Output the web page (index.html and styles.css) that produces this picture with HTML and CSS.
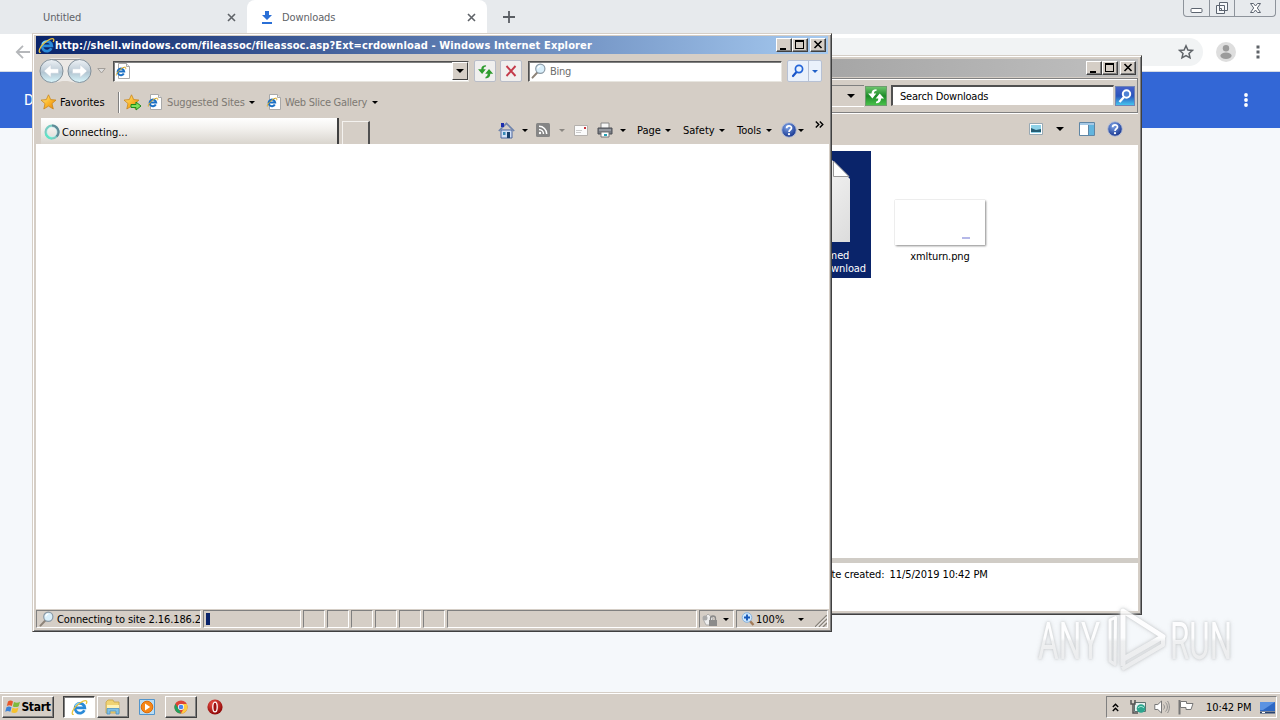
FILE: index.html
```html
<!DOCTYPE html>
<html lang="en">
<head>
  <meta charset="UTF-8">
  <meta name="viewport" content="width=device-width, initial-scale=1.0">
  <title>Desktop</title>
  <link rel="stylesheet" href="styles.css">
</head>
<body>
  <!-- shared icons -->
  <svg class="defs" width="0" height="0">
    <defs>
      <linearGradient id="orb" x1="0" y1="0" x2="0" y2="1">
        <stop offset="0" stop-color="#eef2f6"/><stop offset=".45" stop-color="#c3d0da"/><stop offset=".55" stop-color="#b2c5d1"/><stop offset="1" stop-color="#d9f6fc"/>
      </linearGradient>
      <linearGradient id="gold" x1="0" y1="0" x2="1" y2="1">
        <stop offset="0" stop-color="#fff0a0"/><stop offset=".5" stop-color="#fcb92c"/><stop offset="1" stop-color="#e88008"/>
      </linearGradient>
      <linearGradient id="paper" x1="0" y1="0" x2="1" y2="1">
        <stop offset="0" stop-color="#fff"/><stop offset="1" stop-color="#dcdcdc"/>
      </linearGradient>
      <linearGradient id="mark" gradientUnits="userSpaceOnUse" x1="0" y1="8" x2="0" y2="70">
        <stop offset="0" stop-color="#fff"/><stop offset=".48" stop-color="#fff"/><stop offset=".54" stop-color="#eeeff0"/><stop offset="1" stop-color="#e9eaeb"/>
      </linearGradient>
      <radialGradient id="help-ball" cx=".4" cy=".3" r=".7">
        <stop offset="0" stop-color="#7fa5e8"/><stop offset="1" stop-color="#17358f"/>
      </radialGradient>
      <radialGradient id="opera-ball" cx=".4" cy=".3" r=".7">
        <stop offset="0" stop-color="#f0574c"/><stop offset="1" stop-color="#8e0505"/>
      </radialGradient>
    </defs>
    <symbol id="ie" viewBox="0 0 16 16">
      <path d="M12.600 10.600A4.600 4.600 0 1 1 13 8.300H4.500" fill="none" stroke="#2a8ad8" stroke-width="2.600"/>
      <path d="M4 6.600A4.400 4.400 0 0 1 8 4" fill="none" stroke="#7fd0f8" stroke-width="1.200"/>
      <path d="M2.600 14.500C.6 15 .6 12.500 3 8.900 6.500 4.300 12 .9 14.300 1.700c.8.400.6 1.800 0 3" fill="none" stroke="#e9c23c" stroke-width="1.200"/>
    </symbol>
    <symbol id="ie-page" viewBox="0 0 16 16">
      <path d="M3.500.5h8l3 3v12h-11z" fill="#fff" stroke="#a9a9a9"/>
      <path d="M11.500.5v3h3" fill="#eee" stroke="#a9a9a9"/>
      <path d="M8.800 10.500A3.300 3.300 0 1 1 9.200 8.600H3.500" fill="none" stroke="#1c70c4" stroke-width="2"/>
      <path d="M1.300 12.500c-.8-2 6-9 9-8.300.8.300.5 1.300.2 2" fill="none" stroke="#dba91f"/>
    </symbol>
    <symbol id="star" viewBox="0 0 16 16">
      <path d="M7.500.8l2.200 4.800 5.300.5-4 3.500 1.300 5.400-4.800-2.900-4.700 2.900 1.200-5.400L0 6.100l5.300-.5z" fill="url(#gold)" stroke="#c9851b" stroke-width=".8"/>
    </symbol>
    <symbol id="lens" viewBox="0 0 16 16">
      <path d="M6.300 9.500L1.500 14.600" stroke="#8d8378" stroke-width="2" stroke-linecap="round"/>
      <circle cx="9.300" cy="5.800" r="4.600" fill="#d9effb" stroke="#8b9aa6" stroke-width="1.200"/>
      <path d="M6.800 5.500a2.600 2.600 0 0 1 2.600-2.400" fill="none" stroke="#fff" stroke-width="1.200"/>
    </symbol>
    <symbol id="swap" viewBox="0 0 16 16">
      <path d="M8.500 2C5.500 2 4 3.300 4 5.800H1L4.800 10.300 8.300 5.800H6.200C6.200 4.300 7 3.600 8.500 3.400z"/>
      <path d="M8 14.500c3 0 4.500-1.500 4.500-4.300h2.700L11.300 5.700 7.700 10.200h2.300c0 1.800-.6 2.500-2 2.900z"/>
    </symbol>
    <symbol id="help" viewBox="0 0 16 16">
      <circle cx="8" cy="8" r="7.300" fill="url(#help-ball)" stroke="#b6bfd6"/>
      <path d="M5.600 6.200c0-3.200 4.900-3.100 4.900-.3C10.500 7.800 8 7.800 8 10" fill="none" stroke="#fff" stroke-width="1.700"/>
      <circle cx="8" cy="12.200" r="1.100" fill="#fff"/>
    </symbol>
    <symbol id="min" viewBox="0 0 12 10"><path d="M2 8h6v2H2z"/></symbol>
    <symbol id="max" viewBox="0 0 12 10"><path d="M1 0h9v9H1zM2 2v6h7V2z" fill-rule="evenodd"/></symbol>
    <symbol id="close" viewBox="0 0 12 10"><path d="M2.500 1l7 7M9.500 1l-7 7" stroke="#000" stroke-width="1.600"/></symbol>
  </svg>

  <div class="desktop">
    <!-- Chrome, behind everything -->
    <div class="chrome">
      <div class="tabstrip">
        <div class="chrome-tab"><span>Untitled</span>
          <svg width="9" height="9" viewBox="0 0 9 9"><path d="M1 1l7 7M8 1L1 8" stroke="#5f6368" stroke-width="1.600"/></svg>
        </div>
        <div class="chrome-tab active">
          <svg width="12" height="13" viewBox="0 0 12 13"><path d="M4 0h4v4h3L6 9 1 4h3zM1 11h10v2H1z" fill="#2a6fd6"/></svg>
          <span>Downloads</span>
          <svg width="9" height="9" viewBox="0 0 9 9"><path d="M1 1l7 7M8 1L1 8" stroke="#5f6368" stroke-width="1.600"/></svg>
        </div>
        <svg class="plus" width="12" height="12" viewBox="0 0 12 12"><path d="M6 0v12M0 6h12" stroke="#5a5e63" stroke-width="1.800"/></svg>
        <div class="win7-buttons">
          <div><svg width="13" height="16" viewBox="0 0 13 16"><rect x="1" y="8.500" width="11" height="4" rx="1" fill="#fff" stroke="#5c6470"/></svg></div>
          <div><svg width="15" height="16" viewBox="0 0 15 16"><path d="M4.500 2.500h8v8h-8zM1.500 5.500h8v8h-8z" fill="#f6f8fa" stroke="#5c6470"/><path d="M4.500 8.500h2v2h-2z" fill="none" stroke="#5c6470"/></svg></div>
          <div><svg width="13" height="16" viewBox="0 0 13 16"><path d="M1.500 3.500h3l2 2.500 2-2.500h3L8.300 8l3.200 4.500h-3l-2-2.500-2 2.500h-3L4.700 8z" fill="#fff" stroke="#5c6470"/></svg></div>
        </div>
      </div>
      <div class="chrome-toolbar">
        <svg class="back" width="15" height="14" viewBox="0 0 15 14"><path d="M15 7H2M8 .8L1.800 7 8 13.200" fill="none" stroke="#b5b7ba" stroke-width="1.800"/></svg>
        <div class="omnibox">
          <svg width="16" height="16" viewBox="0 0 16 16"><path d="M8 1.800l1.900 4.200 4.500.4-3.400 3 1 4.400L8 11.500l-4 2.300 1-4.400-3.400-3L6.100 6z" fill="none" stroke="#5f6368" stroke-width="1.500"/></svg>
        </div>
        <svg class="avatar" width="20" height="20" viewBox="0 0 20 20"><circle cx="10" cy="10" r="10" fill="#dedede"/><circle cx="10" cy="6.300" r="3.200" fill="#9b9b9b"/><ellipse cx="10" cy="13.700" rx="5.600" ry="3.200" fill="#9b9b9b"/></svg>
        <svg width="4" height="14" viewBox="0 0 4 14"><path d="M.5.500h3v3h-3zM.5 5.500h3v3h-3zM.5 10.500h3v3h-3z" fill="#5f6368"/></svg>
      </div>
      <div class="page-header">
        <span>Downloads</span>
        <svg width="4" height="14" viewBox="0 0 4 14" fill="#fff"><circle cx="2" cy="2" r="1.900"/><circle cx="2" cy="7" r="1.900"/><circle cx="2" cy="12" r="1.900"/></svg>
      </div>
    </div>

    <!-- Explorer window -->
    <div class="window explorer">
      <div class="titlebar inactive">
        <span class="cap"><svg width="12" height="10"><use href="#min"/></svg></span><span class="cap"><svg width="12" height="10"><use href="#max"/></svg></span><span class="cap gap"><svg width="12" height="10"><use href="#close"/></svg></span>
      </div>
      <div class="explorer-nav">
        <div class="crumbs"><i class="arrow big"></i></div>
        <div class="go-green"><svg width="18" height="18" viewBox="0 0 16 16" fill="#fff"><use href="#swap"/></svg></div>
        <div class="explorer-search">Search Downloads</div>
        <div class="go-blue"><svg width="18" height="18" viewBox="0 0 18 18"><path d="M8 10l-4.500 5" stroke="#fff" stroke-width="2.400"/><circle cx="10.500" cy="7" r="3.700" fill="#4e82d4" stroke="#fff" stroke-width="2"/></svg></div>
      </div>
      <div class="explorer-tools">
        <svg width="14" height="12" viewBox="0 0 14 12"><path d="M.5.500h13v11H.5z" fill="#fff" stroke="#98a9b4"/><path d="M2 2h10v8H2z" fill="#8fd2e8"/><path d="M2 5l5 2 5-1v3H2z" fill="#245d74"/></svg>
        <i class="arrow big"></i>
        <svg width="16" height="14" viewBox="0 0 16 14"><path d="M.5.500h15v13H.5z" fill="#fff" stroke="#5f86a5"/><path d="M1 1h14v2H1z" fill="#a5c9e6"/><path d="M10 3h5v10h-5z" fill="#62b5de"/><path d="M9.500 3v10" stroke="#5f86a5"/></svg>
        <svg width="16" height="16"><use href="#help"/></svg>
      </div>
      <div class="files">
        <div class="file selected">
          <svg width="64" height="82" viewBox="0 0 64 82"><path d="M0 0h46l18 19v63H0z" fill="url(#paper)"/><path d="M47.500 1v15.500H63z" fill="#fff" stroke="#999"/></svg>
          <span class="line-one">Unconfirmed</span>
          <span>.crdownload</span>
        </div>
        <div class="file">
          <div class="thumb"><i></i></div>
          <span>xmlturn.png</span>
        </div>
      </div>
      <div class="details">Date created: <span>11/5/2019 10:42 PM</span></div>
    </div>

    <!-- Internet Explorer window -->
    <div class="window ie">
      <div class="titlebar">
        <svg width="17" height="17"><use href="#ie"/></svg>
        <span class="title">http://shell.windows.com/fileassoc/fileassoc.asp?Ext=crdownload - Windows Internet Explorer</span>
        <span class="cap"><svg width="12" height="10"><use href="#min"/></svg></span><span class="cap"><svg width="12" height="10"><use href="#max"/></svg></span><span class="cap gap"><svg width="12" height="10"><use href="#close"/></svg></span>
      </div>
      <div class="nav-row">
        <svg class="orbs" width="56" height="28" viewBox="0 0 56 28">
          <path d="M14 1h28a13 13 0 0 1 0 25c-6 0-8-2-14-2s-8 2-14 2A13 13 0 0 1 14 1z" fill="#ece9e6"/>
          <path d="M13 2.500h30" stroke="#9b9a9c"/>
          <circle cx="14.500" cy="14" r="11.500" fill="url(#orb)" stroke="#83909a"/>
          <circle cx="42.500" cy="14" r="11.500" fill="url(#orb)" stroke="#83909a"/>
          <path d="M7 14l7-6.500v4.200h7.500v4.600H14v4.200zM50 14l-7-6.500v4.200h-7.500v4.600H43v4.200z" fill="#fff" stroke="#c8d3dc" stroke-width=".7"/>
        </svg>
        <svg class="history" width="9" height="6" viewBox="0 0 9 6"><path d="M.8.500h7.400L4.500 5z" fill="#ddd" stroke="#a39f9a"/></svg>
        <div class="address">
          <svg width="16" height="16"><use href="#ie-page"/></svg>
          <span class="combo"><i class="arrow big"></i></span>
        </div>
        <div class="tool-btn"><svg width="17" height="17" fill="#2f9c2f"><use href="#swap"/></svg></div>
        <div class="tool-btn stop"><svg width="12" height="12" viewBox="0 0 12 12"><path d="M1.500 1l9 10M10.500 1l-9 10" stroke="#c43b4a" stroke-width="1.900"/></svg></div>
        <div class="bing"><svg width="16" height="16"><use href="#lens"/></svg><span>Bing</span></div>
        <div class="search-go">
          <span><svg width="14" height="14" viewBox="0 0 14 14"><path d="M5.500 8L2 12" stroke="#1a55c8" stroke-width="2.200" stroke-linecap="round"/><circle cx="8" cy="5" r="3.600" fill="#e8f3ff" stroke="#2364d8" stroke-width="1.700"/></svg></span>
          <span><i class="arrow blue"></i></span>
        </div>
      </div>
      <div class="fav-row">
        <svg width="16" height="16"><use href="#star"/></svg>
        <span class="fav-label">Favorites</span>
        <i class="divider"></i>
        <svg class="add-star" width="18" height="17" viewBox="0 0 18 17"><use href="#star" width="16" height="16"/><path d="M7 10.500h5v-2.500l5 4-5 4v-2.500H7z" fill="#7ee05a" stroke="#208a1c"/></svg>
        <svg class="suggested-icon" width="16" height="16"><use href="#ie-page"/></svg>
        <span class="suggested">Suggested Sites</span><i class="arrow"></i>
        <svg class="slice-icon" width="16" height="16"><use href="#ie-page"/></svg>
        <span class="slice">Web Slice Gallery</span><i class="arrow"></i>
      </div>
      <div class="tab-row">
        <div class="ie-tab">
          <svg width="16" height="16" viewBox="0 0 16 16" fill="none" stroke-width="2.600"><circle cx="8" cy="8" r="6.200" stroke="#79ccc2"/><path d="M2 9.500A6.200 6.200 0 0 0 8 14.200" stroke="#5fe3c6"/><path d="M8 1.800a6.200 6.200 0 0 1 4.500 10.500" stroke="#608b98"/><circle cx="8" cy="8" r="4.900" stroke="#d8f4f2" stroke-width=".8"/></svg>
          <span>Connecting...</span>
        </div>
        <div class="new-tab"></div>
        <div class="commands">
          <svg width="17" height="17" viewBox="0 0 17 17"><path d="M3 8h11v8H3z" fill="#d3e0f5" stroke="#4d669e"/><path d="M.8 9L8.500 1.500 16.200 9" fill="none" stroke="#6f84ad" stroke-width="1.700"/><path d="M3 1h3v4H3z" fill="#1e2fae"/><path d="M9 10h3v6H9z" fill="#18406d"/><path d="M5 10h2.500v3H5z" fill="#3789b7"/></svg>
          <i class="arrow c1"></i>
          <svg class="c2" width="14" height="14" viewBox="0 0 14 14"><rect width="14" height="14" rx="1.500" fill="#858585"/><g fill="none" stroke="#fff" stroke-width="1.500"><path d="M3 6.500A4.500 4.500 0 0 1 7.500 11M3 3.300A7.700 7.700 0 0 1 10.700 11"/></g><circle cx="4" cy="10" r="1.200" fill="#fff"/></svg>
          <i class="arrow grey c3"></i>
          <svg class="c4" width="14" height="11" viewBox="0 0 14 11"><path d="M.5.500h13v10H.5z" fill="#fbfbfb" stroke="#b5b1ad"/><path d="M2 5.500h6M2 7.500h5" stroke="#ccc"/><path d="M10 2h2v2h-2z" fill="#c9343a"/></svg>
          <svg class="c5" width="16" height="16" viewBox="0 0 16 16"><path d="M4 1h8v6H4z" fill="#f7f7f7" stroke="#888"/><path d="M1 6h14v6H1z" fill="#777b82" stroke="#4c4f54"/><path d="M2 8h12" stroke="#b9bcc1"/><path d="M4 10h8v5H4z" fill="#fff" stroke="#777"/><path d="M7 12h3v2H7z" fill="#24a0b4"/></svg>
          <i class="arrow c1"></i>
          <span class="c6">Page</span><i class="arrow"></i>
          <span class="c7">Safety</span><i class="arrow"></i>
          <span class="c8">Tools</span><i class="arrow"></i>
          <svg class="c9" width="16" height="16"><use href="#help"/></svg><i class="arrow"></i>
          <svg class="more" width="9" height="7" viewBox="0 0 9 7"><path d="M.8.500l3 3-3 3M4.800.500l3 3-3 3" fill="none" stroke="#000" stroke-width="1.400"/></svg>
        </div>
      </div>
      <div class="viewport"></div>
      <div class="status">
        <div class="cell message"><svg width="16" height="16"><use href="#lens"/></svg><span>Connecting to site 2.16.186.2</span></div>
        <div class="cell progress"><i></i></div>
        <div class="cell small"></div><div class="cell small"></div><div class="cell small"></div>
        <div class="cell small"></div><div class="cell small"></div><div class="cell small"></div>
        <div class="cell zone"></div>
        <div class="cell lock">
          <svg width="16" height="16" viewBox="0 0 16 16"><path d="M1 8l5-5 5 4-2 7H4z" fill="#efefef" stroke="#b0aeac"/><circle cx="3" cy="7" r="2.500" fill="#aaa"/><path d="M8.500 9V7.500a2.500 2.500 0 0 1 5 0V9" fill="none" stroke="#888" stroke-width="1.300"/><path d="M7 9h8v6H7z" fill="#8b8b8b"/></svg>
          <i class="arrow"></i>
        </div>
        <div class="cell zoom">
          <svg width="14" height="14" viewBox="0 0 14 14"><path d="M8 8l4.500 5" stroke="#a27b59" stroke-width="2.400"/><circle cx="6" cy="5.500" r="4.800" fill="#cde8ff" stroke="#8ab3dc"/><path d="M6 2.500v6M3 5.500h6" stroke="#1658ba" stroke-width="1.900"/></svg>
          <span>100%</span><i class="arrow"></i>
          <svg class="grip" width="12" height="12" viewBox="0 0 12 12"><path d="M0 12L12 0M4 12l8-8M8 12l4-4" stroke="#87827a" stroke-width="1.300"/><path d="M1.500 12L12 1.500M5.500 12L12 5.500" stroke="#fff" stroke-width=".8"/></svg>
        </div>
      </div>
    </div>

    <svg class="watermark" width="220" height="80" viewBox="0 0 220 80">
      <text x="8" y="59" textLength="62" lengthAdjust="spacingAndGlyphs" fill="url(#mark)">ANY</text>
      <g fill="none" stroke="url(#mark)" stroke-linejoin="round">
        <path d="M85.500 17.500L80 20v41l5 3.500z" stroke-width="3"/>
        <path d="M93 66V11l40 25.500L92 60" stroke-width="5"/>
        <path d="M92 69l41-24v-8" stroke-width="4"/>
      </g>
      <text x="140" y="59" textLength="62" lengthAdjust="spacingAndGlyphs" fill="url(#mark)">RUN</text>
    </svg>

    <div class="taskbar">
      <div class="start">
        <svg width="16" height="16" viewBox="0 0 16 16"><path d="M3 2.500c2-1.500 3.500-1 5 0L6.800 7C5 6 3.500 6 1.800 7z" fill="#e8572a"/><path d="M9 3c2 1 4 1 6-.2L13.700 7.200c-2 1.200-4 1-5.900.2z" fill="#7dba3c"/><path d="M1.500 8.300c1.800-1.200 3.200-1 5 0l-1.200 4.500C3.500 11.800 2 11.800.2 12.800z" fill="#3c83d8"/><path d="M7.500 8.700c2 1 4 1 6-.2l-1.300 4.600c-2 1.200-4 1-5.900.1z" fill="#f6c22d"/></svg>
        <b>Start</b>
      </div>
      <div class="task pressed"><svg width="17" height="17"><use href="#ie"/></svg></div>
      <div class="task">
        <svg width="16" height="16" viewBox="0 0 16 16"><path d="M1 3l2-2h5l1 2h5v11H1z" fill="#f0d373" stroke="#c9a548" stroke-width=".8"/><path d="M2 6h12v4H2z" fill="#fff2b4"/><path d="M2 15V9.500h12V15h-3v-3H5v3z" fill="#7fc0e6" stroke="#4c93c4" stroke-width=".8"/></svg>
      </div>
      <div class="task flat">
        <svg width="16" height="16" viewBox="0 0 16 16"><path d="M.5.500h15v15H.5z" fill="#b9dcf3" stroke="#5295cc"/><circle cx="8" cy="8" r="5.800" fill="#f58718" stroke="#dd6a05"/><path d="M6 4.500l5.200 3.500L6 11.500z" fill="#fff"/></svg>
      </div>
      <div class="task">
        <svg width="14" height="14" viewBox="0 0 16 16"><circle cx="8" cy="8" r="7.500" fill="#dd4436"/><path d="M1.500 4.200L6 11l2 4.500A7.500 7.500 0 0 1 1.500 4.200z" fill="#1fa15d"/><path d="M8 4.500h6.600A7.500 7.500 0 0 1 8 15.500l3.200-5.700z" fill="#fccd3f"/><circle cx="8" cy="8" r="3.500" fill="#fff"/><circle cx="8" cy="8" r="2.700" fill="#4a88ee"/></svg>
      </div>
      <div class="task flat opera">
        <svg width="16" height="16" viewBox="0 0 16 16"><circle cx="8" cy="8" r="7.600" fill="url(#opera-ball)"/><ellipse cx="8" cy="8" rx="2.200" ry="4.900" fill="#a01010" stroke="#fff" stroke-width="1.300"/></svg>
      </div>
      <div class="tray">
        <svg width="7" height="9" viewBox="0 0 7 9"><path d="M.8 4l2.700-2.700L6.200 4M.8 8l2.700-2.700L6.200 8" fill="none" stroke="#000" stroke-width="1.400"/></svg>
        <svg class="t1" width="16" height="16" viewBox="0 0 16 16"><path d="M4.500 3.500h11v9h-11z" fill="#e8f2f0" stroke="#5d716f"/><path d="M1 1v4h4V1M3 5v9h5" fill="none" stroke="#555" stroke-width="1.500"/><circle cx="11" cy="9.500" r="4.300" fill="#2da58e"/><path d="M8 9c2-2 4-2 6 0" fill="none" stroke="#baf0e2"/></svg>
        <svg class="t2" width="16" height="16" viewBox="0 0 16 16"><path d="M.8 5.500h3L7.500 2v12L3.800 10.500h-3z" fill="#fff" stroke="#777"/><path d="M9.500 5.500c1.300 1.500 1.300 3.500 0 5M11.500 3.500c2.500 2.500 2.500 6.500 0 9M13.500 2c2.500 3.500 2.500 8.500 0 12" fill="none" stroke="#888" stroke-width=".9"/></svg>
        <svg class="t3" width="16" height="16" viewBox="0 0 16 16"><path d="M1.500 1v14.500" stroke="#777" stroke-width="2"/><path d="M2.500 2.500h6v2h6.500l-2 6H8v-2H2.500z" fill="#fff" stroke="#777"/></svg>
        <span class="clock">10:42 PM</span>
        <svg class="t4" width="15" height="13" viewBox="0 0 15 13"><path d="M0 1h15v9H0z" fill="#2d68c4"/><path d="M0 1h15L3 9H0z" fill="#5b93e2"/><path d="M0 10.500h15v2H0z" fill="#274370"/><path d="M2 11.500h3" stroke="#fff"/></svg>
      </div>
    </div>
  </div>
</body>
</html>
```
FILE: styles.css
```css
* {
  box-sizing: border-box;
}
body {
  margin: 0;
  font-family: "DejaVu Sans Condensed", "DejaVu Sans", sans-serif;
  font-size: 11px;
  color: #000;
}
svg {
  display: block;
  flex: none;
}
.defs {
  position: absolute;
}
.desktop {
  position: relative;
  width: 1280px;
  height: 720px;
  overflow: hidden;
  background: #f5f8fb;
}

/* small dropdown triangle */
.arrow {
  flex: none;
  width: 0;
  height: 0;
  border: 3px solid transparent;
  border-top-color: #000;
  border-bottom: 0;
}
.arrow.big {
  border-width: 4px 4px 0;
}
.arrow.grey {
  border-top-color: #8b8782;
}
.arrow.blue {
  border-top-color: #2060c8;
}

/* Chrome */
.tabstrip {
  display: flex;
  align-items: center;
  height: 34px;
  background: #e7eaed;
}
.chrome-tab {
  display: flex;
  align-items: center;
  width: 247px;
  height: 34px;
  padding: 0 11px 0 43px;
  color: #5f6368;
}
.chrome-tab span {
  flex: 1;
  letter-spacing: -.12px;
}
.chrome-tab.active {
  width: 240px;
  padding-left: 14px;
  background: #fff;
  border-radius: 8px 8px 0 0;
}
.chrome-tab.active span {
  margin-left: 9px;
}
.plus {
  margin-left: 16px;
}
.win7-buttons {
  display: flex;
  align-self: flex-start;
  margin-left: auto;
  margin-right: 4px;
  height: 17px;
  border: 1px solid #8d939b;
  border-top: 0;
  border-radius: 0 0 4px 4px;
}
.win7-buttons div {
  display: flex;
  justify-content: center;
  width: 25px;
}
.win7-buttons div + div {
  border-left: 1px solid #8d939b;
}
.win7-buttons div:last-child {
  width: 41px;
}
.chrome-toolbar {
  display: flex;
  align-items: center;
  height: 38px;
  padding: 0 20px 2px 15px;
  background: #fff;
  border-bottom: 1px solid #d5dbe4;
}
.omnibox {
  display: flex;
  align-items: center;
  justify-content: flex-end;
  flex: 1;
  height: 28px;
  margin: 0 13px 0 90px;
  padding-right: 9px;
  border-radius: 14px;
  background: #f1f3f4;
}
.avatar {
  margin-right: 20px;
}
.page-header {
  display: flex;
  align-items: center;
  justify-content: space-between;
  height: 56px;
  padding: 0 32px 0 24px;
  background: #3367d6;
  color: #fff;
  font-family: Roboto, sans-serif;
  font-size: 15px;
}

/* classic windows */
.window {
  position: absolute;
  display: flex;
  flex-direction: column;
  padding: 2px 3px 3px 3px;
  background: #d5cec6;
  border: 1px solid #d5cec6;
  border-right: 1px solid #404040;
  border-bottom: 1px solid #404040;
  box-shadow: inset 1px 1px #fff, inset -1px -1px #808080;
}
.titlebar {
  display: flex;
  align-items: center;
  flex: none;
  height: 18px;
  padding: 0 2px;
  background: linear-gradient(to right, #0a246a, #a6caf0);
}
.titlebar.inactive {
  justify-content: flex-end;
  background: linear-gradient(to right, #9b9b9b, #c0c0c0);
}
.title {
  flex: 1;
  color: #fff;
  font-weight: bold;
  letter-spacing: .12px;
  white-space: nowrap;
}
.cap {
  display: flex;
  justify-content: center;
  width: 16px;
  height: 14px;
  padding-top: 1px;
  background: #d5cec6;
  border: 1px solid;
  border-color: #fff #404040 #404040 #fff;
  box-shadow: inset -1px -1px #808080;
}
.cap.gap {
  margin-left: 2px;
}

/* Explorer */
.explorer {
  left: 700px;
  top: 55px;
  width: 442px;
  height: 560px;
  padding-top: 3px;
}
.explorer-nav {
  display: flex;
  align-items: center;
  flex: none;
  height: 35px;
  margin-top: 1px;
  border: 1px solid #808080;
  box-shadow: inset 1px 1px #fff, 0 1px #fff;
}
.crumbs {
  display: flex;
  align-items: center;
  justify-content: flex-end;
  width: 159px;
  height: 22px;
  padding-right: 9px;
  border: 1px solid #808080;
  border-right: 0;
  border-bottom-color: #fff;
}
.go-green,
.go-blue {
  display: flex;
  align-items: center;
  justify-content: center;
  width: 22px;
  height: 20px;
  background: linear-gradient(#6cc46c, #1d8c28 50%, #49c14a);
  border: 1px solid #6f9c6f;
}
.go-green {
  margin-left: 1px;
}
.go-blue {
  width: 20px;
  margin-left: 1px;
  background: linear-gradient(#4661c8, #2a54bc 50%, #45c4ee);
  border-color: #7084b5;
}
.explorer-search {
  width: 223px;
  height: 21px;
  margin-left: 4px;
  padding-left: 7px;
  line-height: 19px;
  letter-spacing: -.2px;
  background: #fff;
  border: 2px solid;
  border-color: #505050 #d5cec6 #d5cec6 #505050;
  border-width: 2px 1px 1px 2px;
}
.explorer-tools {
  display: flex;
  align-items: center;
  flex: none;
  height: 32px;
  padding-left: 325px;
}
.explorer-tools .arrow {
  margin-left: 13px;
}
.explorer-tools svg + svg {
  margin-left: 12px;
}
.explorer-tools .arrow + svg {
  margin-left: 15px;
}
.files {
  display: flex;
  flex: 1;
  padding-top: 6px;
  background: #fff;
}
.file {
  width: 138px;
  height: 127px;
  text-align: center;
  line-height: 13px;
  letter-spacing: -.1px;
}
.file.selected {
  flex: none;
  width: 84px;
  margin-left: 83px;
  padding: 9px 5px 0 0;
  background: #0a246a;
  color: #fff;
  text-align: right;
}
.file.selected svg {
  margin: 0 0 7px -1px;
}
.file.selected span {
  display: block;
}
.file.selected .line-one {
  padding-right: 18px;
}
.thumb {
  display: flex;
  align-items: flex-end;
  justify-content: flex-end;
  width: 90px;
  height: 45px;
  margin: 49px auto 5px;
  padding: 0 15px 6px;
  background: #fff;
  box-shadow: 0 0 1px #bbb, 1px 1px 2px #888;
}
.thumb i {
  width: 8px;
  height: 2px;
  background: #b5b8e8;
}
.details {
  flex: none;
  height: 53px;
  padding: 5px 0 0 114px;
  border-top: 5px solid #d0ccc6;
  background: #fff;
  white-space: nowrap;
  letter-spacing: -.1px;
}
.details span {
  margin-left: 2px;
}

/* Internet Explorer */
.ie {
  left: 32px;
  top: 33px;
  width: 800px;
  height: 599px;
}
.nav-row {
  display: flex;
  align-items: center;
  flex: none;
  height: 34px;
  padding-left: 1px;
}
.history {
  margin-left: 4px;
}
.address,
.bing {
  display: flex;
  align-items: center;
  height: 21px;
  background: #fff;
  border: 1px solid;
  border-color: #505050 #e8e6e0 #e8e6e0 #505050;
  box-shadow: inset 1px 1px #808080;
}
.address {
  justify-content: space-between;
  width: 356px;
  margin-left: 7px;
  padding-left: 1px;
}
.combo {
  display: flex;
  align-items: center;
  justify-content: center;
  width: 16px;
  height: 18px;
  background: #d5cec6;
  border: 1px solid;
  border-color: #fff #404040 #404040 #fff;
}
.tool-btn {
  display: flex;
  align-items: center;
  justify-content: center;
  width: 22px;
  height: 22px;
  margin-left: 5px;
  background: #f0efee;
  border: 1px solid #b9bdc8;
  border-radius: 2px;
}
.tool-btn.stop {
  margin-left: 4px;
}
.bing {
  width: 254px;
  margin-left: 6px;
  padding-left: 2px;
  color: #6d6d6d;
}
.bing span {
  margin-left: 3px;
  padding-top: 1px;
  letter-spacing: -.3px;
}
.search-go {
  display: flex;
  height: 22px;
  margin-left: 5px;
  background: #eaf1fb;
  border: 1px solid #b7c1d4;
  border-radius: 2px;
}
.search-go span {
  display: flex;
  align-items: center;
  justify-content: center;
  width: 20px;
}
.search-go span + span {
  width: 13px;
  border-left: 1px solid #b7c1d4;
}
.fav-row {
  display: flex;
  align-items: center;
  flex: none;
  height: 28px;
  padding-left: 5px;
}
.fav-label {
  width: 50px;
  margin-left: 3px;
}
.divider {
  width: 2px;
  height: 21px;
  margin-left: 8px;
  border-left: 1px solid #808080;
  border-right: 1px solid #fff;
}
.add-star {
  margin-left: 4px;
}
.suggested-icon {
  margin-left: 5px;
}
.suggested {
  width: 82px;
  margin-left: 4px;
  color: #7d7973;
  letter-spacing: -.15px;
  white-space: nowrap;
}
.slice-icon {
  margin-left: 11px;
}
.slice {
  width: 87px;
  margin-left: 3px;
  color: #7d7973;
  letter-spacing: -.25px;
  white-space: nowrap;
}
.tab-row {
  display: flex;
  align-items: flex-end;
  flex: none;
  height: 28px;
  padding-left: 5px;
}
.ie-tab {
  display: flex;
  align-items: center;
  width: 298px;
  height: 26px;
  padding: 2px 0 0 3px;
  background: linear-gradient(#fff, #f3f1ee 40%, #d9d5ce);
  border-right: 2px solid #404040;
}
.ie-tab span {
  margin-left: 2px;
}
.new-tab {
  width: 28px;
  height: 23px;
  margin-left: 3px;
  border: 1px solid #f4f2ef;
  border-bottom: 0;
  border-right: 2px solid #505050;
}
.commands {
  display: flex;
  align-items: center;
  height: 28px;
  margin-left: 128px;
  width: 328px;
}
.c1 { margin-left: 7px; }
.c2 { margin-left: 8px; }
.c3 { margin-left: 9px; }
.c4 { margin-left: 9px; }
.c5 { margin-left: 9px; }
.c6 { width: 28px; margin-left: 11px; }
.c7 { width: 36px; margin-left: 12px; }
.c8 { width: 29px; margin-left: 12px; }
.c9 { margin-left: 9px; margin-right: 1px; }
.more {
  margin: -12px 0 0 11px;
}
.viewport {
  flex: 1;
  margin-right: -1px;
  background: #fff;
}
.status {
  display: flex;
  flex: none;
  gap: 2px;
  height: 19px;
  padding-top: 1px;
}
.cell {
  display: flex;
  align-items: center;
  width: 22px;
  height: 18px;
  border: 1px solid;
  border-color: #808080 #fff #fff #808080;
}
.cell.message {
  width: 165px;
  padding-left: 2px;
  overflow: hidden;
  white-space: nowrap;
}
.message span {
  margin-left: 2px;
  letter-spacing: -.1px;
}
.cell.progress {
  width: 98px;
  padding-left: 2px;
}
.progress i {
  width: 4px;
  height: 12px;
  background: #0a246a;
}
.cell.zone {
  width: 250px;
}
.cell.lock {
  width: 35px;
  padding-left: 2px;
}
.lock .arrow {
  margin-left: 5px;
}
.cell.zoom {
  width: 92px;
  padding-left: 4px;
}
.zoom span {
  width: 44px;
  margin-left: 1px;
}
.zoom .grip {
  align-self: flex-end;
  margin-left: 11px;
}

.watermark {
  position: absolute;
  left: 1030px;
  top: 600px;
  font: 51px Roboto, sans-serif;
  opacity: .85;
  filter: drop-shadow(0 0 1px #c3c6c8) drop-shadow(0 0 2px #d3d5d7);
}

/* taskbar */
.taskbar {
  position: absolute;
  left: 0;
  right: 0;
  bottom: 0;
  display: flex;
  align-items: center;
  height: 28px;
  padding: 1px 3px 0 2px;
  background: #d5cec6;
  border-top: 1px solid #d5cec6;
  box-shadow: inset 0 1px #fff;
}
.start,
.task {
  display: flex;
  align-items: center;
  justify-content: center;
  height: 22px;
  border: 1px solid;
  border-color: #fff #404040 #404040 #fff;
  box-shadow: inset -1px -1px #808080;
}
.start {
  width: 52px;
  margin-right: 9px;
  font-size: 12px;
}
.start b {
  letter-spacing: -.3px;
}
.task {
  width: 32px;
  margin-right: 2px;
}
.task.pressed {
  background: #fff;
  border-color: #404040 #fff #fff #404040;
  box-shadow: inset 1px 1px #808080;
}
.task.flat {
  border-color: transparent;
  box-shadow: none;
}
.tray {
  display: flex;
  align-items: center;
  width: 171px;
  height: 22px;
  margin-left: auto;
  padding-left: 5px;
  border: 1px solid;
  border-color: #808080 #fff #fff #808080;
}
.t1 { margin-left: 11px; }
.t2 { margin-left: 8px; }
.t3 { margin-left: 8px; }
.clock {
  width: 50px;
  margin-left: 12px;
  letter-spacing: -.1px;
  white-space: nowrap;
}
.t4 { margin-left: 4px; }
```
